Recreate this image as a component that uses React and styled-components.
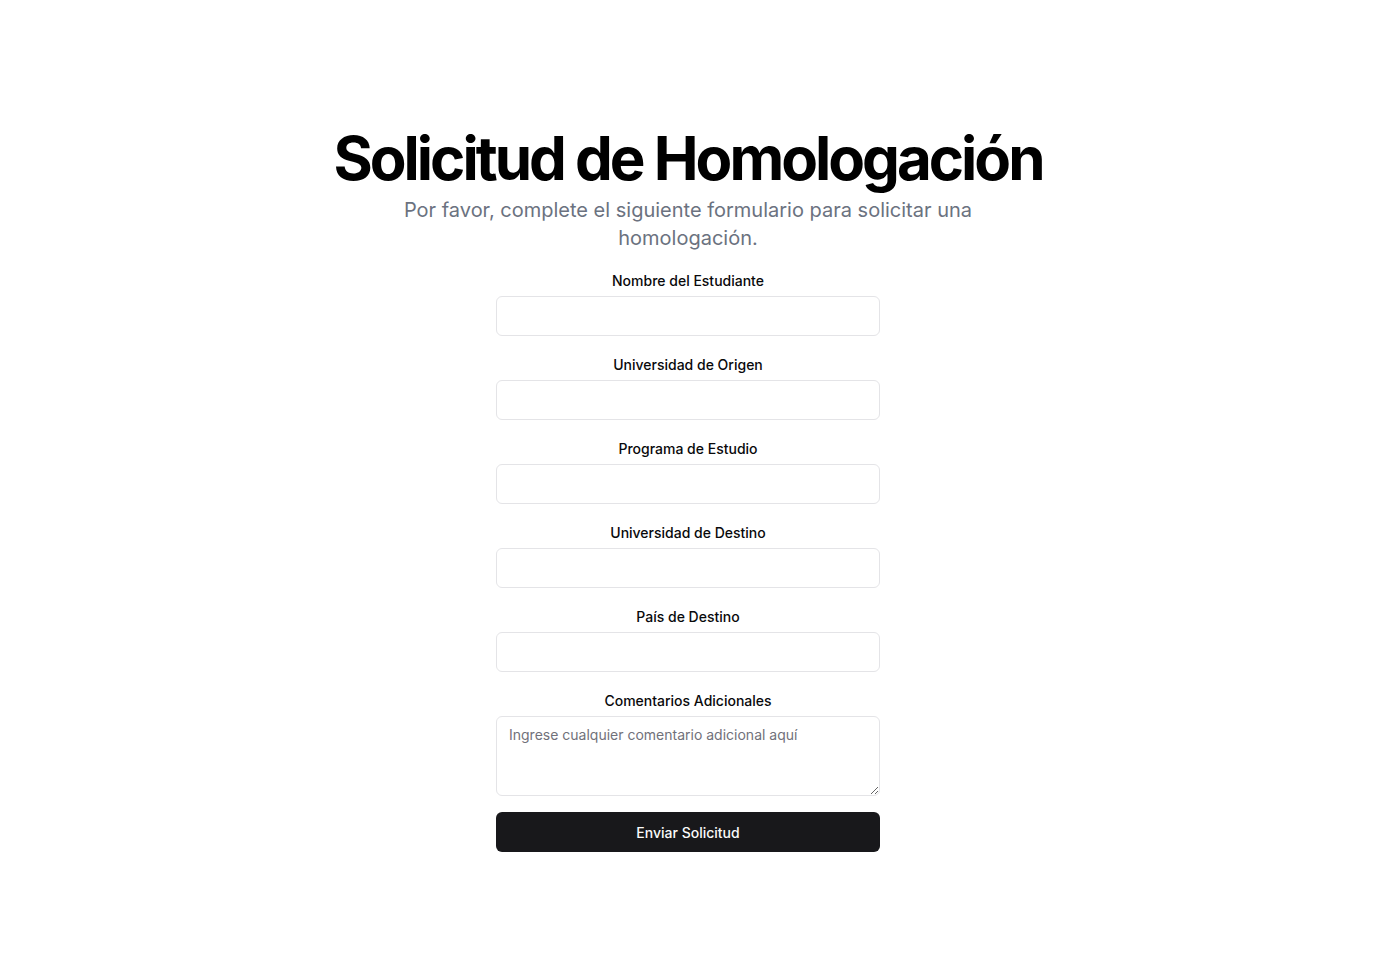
import styled, { createGlobalStyle } from 'styled-components';

const GlobalStyle = createGlobalStyle`
  * { box-sizing: border-box; }
  body {
    margin: 0;
    font-family: Inter, "Noto Sans", sans-serif;
    background: #fff;
    color: #09090b;
  }
`;

const Page = styled.main`
  min-height: 100vh;
  display: flex;
  flex-direction: column;
  align-items: center;
  justify-content: center;
  padding: 0 16px;
`;

const Header = styled.div`
  display: flex;
  flex-direction: column;
  align-items: center;
  text-align: center;
  gap: 8px;
  margin-bottom: 22px;
`;

const Title = styled.h1`
  margin: 0;
  font-size: 60px;
  line-height: 1;
  font-weight: 700;
  letter-spacing: -0.05em;
  color: #000;
`;

const Subtitle = styled.p`
  margin: 0;
  max-width: 600px;
  font-size: 20px;
  line-height: 28px;
  color: #6b7280;
`;

const Form = styled.form`
  width: 384px;
  display: flex;
  flex-direction: column;
  gap: 22px;
`;

const Field = styled.div`
  display: flex;
  flex-direction: column;
  gap: 8px;
`;

const Label = styled.label`
  font-size: 14px;
  line-height: 14px;
  font-weight: 500;
  text-align: center;
  color: #09090b;
`;

const Input = styled.input`
  height: 40px;
  width: 100%;
  border: 1px solid #e4e4e7;
  border-radius: 6px;
  padding: 8px 12px;
  font-family: inherit;
  font-size: 14px;
  background: #fff;
  outline: none;
`;

const TextArea = styled.textarea`
  min-height: 80px;
  height: 80px;
  width: 100%;
  border: 1px solid #e4e4e7;
  border-radius: 6px;
  padding: 8px 12px;
  font-family: inherit;
  font-size: 14px;
  line-height: 20px;
  background: #fff;
  outline: none;
  display: block;
  &::placeholder { color: #71717a; }
`;

const Submit = styled.button`
  height: 40px;
  width: 100%;
  margin-top: -6px;
  border: none;
  border-radius: 6px;
  background: #18181b;
  color: #fafafa;
  font-family: inherit;
  font-size: 14px;
  font-weight: 500;
  cursor: pointer;
`;

const fields = [
  { id: 'nombre', label: 'Nombre del Estudiante' },
  { id: 'origen', label: 'Universidad de Origen' },
  { id: 'programa', label: 'Programa de Estudio' },
  { id: 'destino', label: 'Universidad de Destino' },
  { id: 'pais', label: 'País de Destino' },
];

export default function App() {
  return (
    <>
      <GlobalStyle />
      <Page>
        <Header>
          <Title>Solicitud de Homologación</Title>
          <Subtitle>
            Por favor, complete el siguiente formulario para solicitar una homologación.
          </Subtitle>
        </Header>
        <Form onSubmit={(e) => e.preventDefault()}>
          {fields.map((f) => (
            <Field key={f.id}>
              <Label htmlFor={f.id}>{f.label}</Label>
              <Input id={f.id} />
            </Field>
          ))}
          <Field>
            <Label htmlFor="comentarios">Comentarios Adicionales</Label>
            <TextArea id="comentarios" placeholder="Ingrese cualquier comentario adicional aquí" />
          </Field>
          <Submit type="submit">Enviar Solicitud</Submit>
        </Form>
      </Page>
    </>
  );
}
